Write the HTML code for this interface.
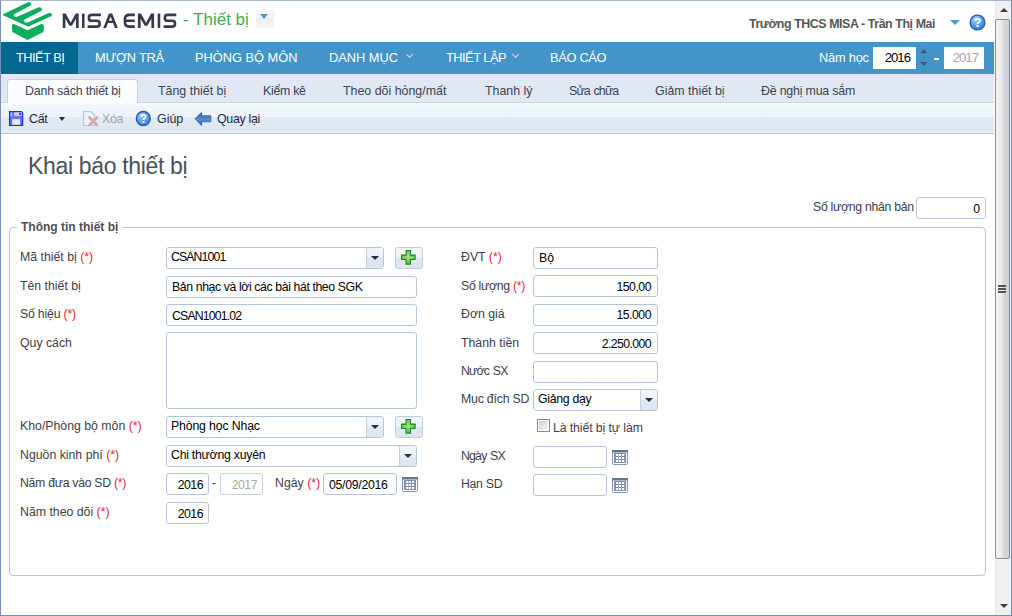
<!DOCTYPE html>
<html><head><meta charset="utf-8">
<style>
*{box-sizing:border-box;margin:0;padding:0}
html,body{width:1012px;height:616px;overflow:hidden;background:#fff}
body{position:relative;font-family:"Liberation Sans",sans-serif;color:#333}
.a{position:absolute}
.t{position:absolute;white-space:nowrap;line-height:20px;font-size:12.3px}
#frame{position:absolute;left:0;top:0;width:1012px;height:616px;border-left:1px solid #7391b4;border-top:1px solid #a9b9cd;border-right:1px solid #7391b4;border-bottom:1px solid #7391b4;pointer-events:none;z-index:50}
#nav{left:1px;top:42px;width:993px;height:32px;background:#4394c9}
#nav .act{left:0;top:0;width:77px;height:32px;background:#03678f}
.nv{position:absolute;top:48px;color:#fff;font-size:12.8px;line-height:20px;white-space:nowrap}
.chev{position:absolute;width:5px;height:5px;border-right:1px solid #d0e2f0;border-bottom:1px solid #d0e2f0;transform:rotate(45deg)}
#sub{left:1px;top:74px;width:993px;height:29px;background:#dfe8f3;border-bottom:1px solid #c8d5e4}
#acttab{left:7px;top:79px;width:131px;height:25px;background:#fbfcfe;border:1px solid #c3d1e2;border-bottom:none;border-radius:3px 3px 0 0}
.st{position:absolute;top:81px;color:#3a4454;font-size:12.4px;line-height:20px;white-space:nowrap}
#tb{left:1px;top:103px;width:993px;height:31px;background:linear-gradient(#fcfdff 0%,#f1f6fc 8%,#eef4fb 45%,#e2eaf4 48%,#dfe7f2 90%,#e5ecf5 100%);border-bottom:1px solid #b6c9de}
.tbt{position:absolute;top:109px;font-size:12.4px;line-height:20px;white-space:nowrap;color:#1e2a40}
.lbl{position:absolute;font-size:12.3px;line-height:20px;white-space:nowrap;color:#404048}
.req{color:#e8203a}
.inp{position:absolute;height:22px;background:#fff;border:1px solid #b3c6dc;border-radius:3px}
.iv{position:absolute;top:-1px;font-size:12.3px;line-height:20px;white-space:nowrap;color:#000}
.num{letter-spacing:-0.5px}
.ddb{position:absolute;top:0;right:0;width:17px;height:20px;background:linear-gradient(#f1f5fa 0%,#eef3f9 45%,#e0e8f2 50%,#dde6f1 100%);border-left:1px solid #bfcfe0;border-radius:0 2px 2px 0}
.ddb:after{content:"";position:absolute;left:4px;top:8px;border-left:4px solid transparent;border-right:4px solid transparent;border-top:4px solid #1e3050}
.plus{position:absolute;width:28px;height:22px;border:1px solid #c2cedc;border-radius:3px;background:linear-gradient(#f3f6fb 0%,#edf2f8 48%,#dee7f1 52%,#dce5f0 100%)}
.cal{position:absolute;width:16px;height:15px}
#sb{left:995px;top:1px;width:16px;height:614px;background:#f0f0f0;border-left:1px solid #e8e8e8}
</style></head><body>
<div id="frame"></div>

<!-- header -->
<svg class="a" style="left:0;top:0" width="60" height="42" viewBox="0 0 60 42">
  <path fill="#0aae5e" d="M3.6 14.0 L27.5 2.6 C29.5 1.7 32.3 3.2 30.7 5.5 L14.5 14.0 C12.8 15.0 13.8 16.8 16.4 17.1 L38.2 7.5 C40.5 6.5 43 8.8 41.5 10.8 L24.5 19.6 C22.5 20.6 24.5 22.8 27.7 22.6 L48.1 13.3 C50.5 12.2 53.5 14.6 51.5 16.0 L29.8 26.1 C28.8 26.6 27.6 26.6 26.6 26.1 L3.6 15.4 C2.6 14.9 2.6 14.5 3.6 14.0 Z"/>
  <path fill="#0aae5e" d="M11.9 26.5 C11.9 24.5 13 23.6 14.5 24.3 L27.5 30.2 L40.8 24.3 C42.5 23.6 43.8 24.5 43.8 26.3 L43.8 30.8 C43.8 31.5 43.5 31.9 42.8 32.3 L28.5 39.5 C27.9 39.8 27.3 39.8 26.7 39.5 L12.9 32.2 C12.2 31.8 11.9 31.4 11.9 30.8 Z"/>
</svg>
<svg class="a" style="left:0;top:0" width="180" height="42" viewBox="0 0 180 42"><g fill="none" stroke="#363a4a" stroke-width="2.6" stroke-linejoin="miter" stroke-miterlimit="3">
<path d="M62.70 27.90 L62.70 13.60 L65.70 13.60 L70.70 22.80 L75.70 13.60 L78.70 13.60 L78.70 27.90 L76.00 27.90 L76.00 18.80 L71.90 25.80 L69.50 25.80 L65.40 18.80 L65.40 27.90 Z" fill="#363a4a" stroke="none"/>
<path d="M83.25 13.6 V27.9"/>
<path d="M100.9 14.9 H92 Q88.9 14.9 88.9 17.6 V18.2 Q88.9 20.8 91.8 20.8 H96.8 Q99.6 20.8 99.6 23.6 V23.9 Q99.6 26.6 96.8 26.6 H87.6"/>
<path d="M103.3 27.9 L108.9 13.6 L112.2 13.6 L117.8 27.9 L115 27.9 L113.12 23.1 L107.98 23.1 L106.1 27.9 Z M108.92 20.7 L110.55 16.5 L112.18 20.7 Z" fill="#363a4a" fill-rule="evenodd" stroke="none"/>
<path d="M134.8 14.9 H129.5 Q124.9 14.9 124.9 19.5 V22 Q124.9 26.6 129.5 26.6 H134.8 M125.5 20.8 H134.8"/>
<path d="M137.90 27.90 L137.90 13.60 L140.90 13.60 L146.00 22.80 L151.10 13.60 L154.10 13.60 L154.10 27.90 L151.40 27.90 L151.40 18.80 L147.20 25.80 L144.80 25.80 L140.60 18.80 L140.60 27.90 Z" fill="#363a4a" stroke="none"/>
<path d="M158.95 13.6 V27.9"/>
<path d="M176.3 14.9 H167.4 Q164.9 14.9 164.9 17.6 V18.2 Q164.9 20.8 167.6 20.8 H172.2 Q175 20.8 175 23.6 V23.9 Q175 26.6 172.2 26.6 H163.6"/>
</g></svg>
<div class="t" style="left:183px;top:10px;font-size:17px;color:#45a94f">- Thiết bị</div>
<div class="a" style="left:256px;top:10px;width:18px;height:18px;background:#f3f3f3"></div>
<div class="a" style="left:260px;top:14px;border-left:4.7px solid transparent;border-right:4.7px solid transparent;border-top:5.5px solid #4a9acc"></div>

<div class="t" style="left:749px;top:14px;font-size:12.4px;font-weight:bold;color:#565656;letter-spacing:-0.42px">Trường THCS MISA - Trần Thị Mai</div>
<div class="a" style="left:950px;top:20px;border-left:5px solid transparent;border-right:5px solid transparent;border-top:5px solid #4a9acc"></div>
<svg class="a" style="left:969px;top:14px" width="17" height="17" viewBox="0 0 17 17">
  <defs><radialGradient id="hg" cx="0.4" cy="0.3" r="0.75"><stop offset="0" stop-color="#a8d4fa"/><stop offset="0.55" stop-color="#5a9ee8"/><stop offset="1" stop-color="#3878d0"/></radialGradient></defs>
  <circle cx="8.5" cy="8.5" r="7.4" fill="url(#hg)" stroke="#1b5bb4" stroke-width="1.3"/>
  <path d="M6 6.6 C6 4.2 11 4.2 11 6.6 C11 8.2 8.8 8.3 8.6 10" fill="none" stroke="#fff" stroke-width="1.8"/>
  <rect x="7.6" y="11" width="2" height="2" fill="#fff"/>
</svg>

<!-- nav -->
<div id="nav" class="a"><div class="act a"></div></div>
<div class="nv" style="left:16px;letter-spacing:-0.5px">THIẾT BỊ</div>
<div class="nv" style="left:95px;letter-spacing:-0.25px">MƯỢN TRẢ</div>
<div class="nv" style="left:195px">PHÒNG BỘ MÔN</div>
<div class="nv" style="left:329px">DANH MỤC</div>
<div class="chev" style="left:407px;top:52px"></div>
<div class="nv" style="left:446px;letter-spacing:-0.5px">THIẾT LẬP</div>
<div class="chev" style="left:513px;top:52px"></div>
<div class="nv" style="left:550px;letter-spacing:-0.3px">BÁO CÁO</div>
<div class="nv" style="left:819px;letter-spacing:-0.2px">Năm học</div>
<div class="a" style="left:873px;top:47px;width:43px;height:22px;background:#fff"></div>
<div class="iv num" style="left:873px;top:48px;width:37px;text-align:right;font-size:13.2px;letter-spacing:-1px">2016</div>
<svg class="a" style="left:919px;top:48px" width="10" height="20" viewBox="0 0 10 20"><path d="M1 5.2 L4.75 1 L8.5 5.2 Z M1 14 L8.5 14 L4.75 18.2 Z" fill="#485874"/></svg>

<div class="a" style="left:934px;top:58px;width:4.5px;height:2px;background:#fff"></div>
<div class="a" style="left:944px;top:47px;width:40px;height:22px;background:#fff"></div>
<div class="iv num" style="left:944px;top:48px;width:34px;text-align:right;font-size:13.2px;letter-spacing:-1px;color:#a8a8a8">2017</div>

<!-- subtabs -->
<div id="sub" class="a"></div>
<div id="acttab" class="a"></div>
<div class="st" style="left:25px;letter-spacing:-0.2px">Danh sách thiết bị</div>
<div class="st" style="left:158px">Tăng thiết bị</div>
<div class="st" style="left:263px;letter-spacing:-0.3px">Kiểm kê</div>
<div class="st" style="left:343px">Theo dõi hỏng/mất</div>
<div class="st" style="left:485px">Thanh lý</div>
<div class="st" style="left:569px;letter-spacing:-0.85px;word-spacing:1px">Sửa chữa</div>
<div class="st" style="left:655px">Giảm thiết bị</div>
<div class="st" style="left:761px;letter-spacing:-0.2px">Đề nghị mua sắm</div>

<!-- toolbar -->
<div id="tb" class="a"></div>
<svg class="a" style="left:8px;top:110px" width="17" height="17" viewBox="0 0 17 17">
  <path d="M1.6 1.6 H13.3 L14.6 2.9 V15.4 H1.6 Z" fill="#6178f0" stroke="#1a30dc" stroke-width="1.3"/>
  <rect x="2.6" y="2.4" width="1.2" height="4" fill="#c8d2fa"/>
  <rect x="6.2" y="2.3" width="7.4" height="3.6" fill="#d0d0d0"/>
  <rect x="11" y="2.8" width="1.8" height="2.2" fill="#2a44e8"/>
  <rect x="4.2" y="9.2" width="7.8" height="5.6" fill="#e8e8e8"/>
</svg>
<div class="tbt" style="left:29px;letter-spacing:-0.3px">Cất</div>
<div class="a" style="left:59px;top:117px;border-left:3.5px solid transparent;border-right:3.5px solid transparent;border-top:4.5px solid #1e2a40"></div>
<svg class="a" style="left:82px;top:110px" width="18" height="17" viewBox="0 0 18 17">
  <path d="M1.5 1.5 H9 L12.5 5 V15.5 H1.5 Z" fill="#eaf4fc" stroke="#a6cdee" stroke-width="1.2"/>
  <path d="M7.5 7.5 L15 15 M15 7.5 L7.5 15" stroke="#e0a2aa" stroke-width="2.6" stroke-linecap="round"/>
</svg>
<div class="tbt" style="left:102px;color:#a0a8b6;letter-spacing:-0.3px">Xóa</div>
<svg class="a" style="left:135px;top:110px" width="17" height="17" viewBox="0 0 17 17">
  <circle cx="8.3" cy="8.5" r="7" fill="url(#hg)" stroke="#1b5bb4" stroke-width="1.3"/>
  <path d="M5.9 6.6 C5.9 4.3 10.7 4.3 10.7 6.6 C10.7 8.2 8.6 8.3 8.4 10" fill="none" stroke="#fff" stroke-width="1.8"/>
  <rect x="7.4" y="11" width="2" height="2" fill="#fff"/>
</svg>
<div class="tbt" style="left:157px">Giúp</div>
<svg class="a" style="left:194px;top:111px" width="18" height="16" viewBox="0 0 18 16">
  <defs><linearGradient id="ag" x1="0" y1="0" x2="0" y2="1"><stop offset="0" stop-color="#2558a4"/><stop offset="0.55" stop-color="#5b8fd2"/><stop offset="1" stop-color="#2558a4"/></linearGradient></defs>
  <path d="M1 7.7 L7.6 1.3 V4.7 H16.8 V10.8 H7.6 V14.7 Z" fill="url(#ag)" stroke="#2e66b4" stroke-width="0.8"/>
</svg>
<div class="tbt" style="left:217px;letter-spacing:-0.3px">Quay lại</div>

<!-- content -->
<div class="t" style="left:28px;top:156px;font-size:23px;letter-spacing:-0.33px;color:#4c515b">Khai báo thiết bị</div>

<div class="inp" style="left:916px;top:197px;width:70px"></div>
<div class="lbl" style="left:813px;top:197px;letter-spacing:-0.3px">Số lượng nhân bản</div>
<div class="iv" style="left:916px;top:199px;width:64px;text-align:right">0</div>

<!-- fieldset -->
<div class="a" style="left:9px;top:227px;width:977px;height:349px;border:1px solid #a8c8e6;border-radius:4px"></div>
<div class="a" style="left:17px;top:222px;width:105px;height:10px;background:#fff"></div>
<div class="lbl" style="left:21px;top:217px;font-weight:bold;color:#4f4f4f;font-size:12px">Thông tin thiết bị</div>

<!-- left column -->
<div class="lbl" style="left:20px;top:247px">Mã thiết bị <span class="req">(*)</span></div>
<div class="inp" style="left:166px;top:247px;width:218px"><div class="iv num" style="left:4px;top:-1px;letter-spacing:-0.9px">CSAN1001</div><div class="ddb"></div></div>
<div class="plus" style="left:395px;top:247px"><svg class="a" style="left:5px;top:2px" width="16" height="16" viewBox="0 0 16 16"><defs><radialGradient id="pg" cx="0.5" cy="0.45" r="0.6"><stop offset="0" stop-color="#a6e68e"/><stop offset="1" stop-color="#4cbc3c"/></radialGradient></defs><path d="M5.1 0.5 h4.4 v4.6 h4.6 v4.4 h-4.6 v4.6 h-4.4 v-4.6 h-4.6 v-4.4 h4.6 z" fill="url(#pg)" stroke="#1a8a1a" stroke-width="1.1"/></svg></div>
<div class="lbl" style="left:20px;top:276px">Tên thiết bị</div>
<div class="inp" style="left:166px;top:276px;width:251px"><div class="iv" style="left:5px;top:0;letter-spacing:-0.4px">Bản nhạc và lời các bài hát theo SGK</div></div>
<div class="lbl" style="left:20px;top:304px;letter-spacing:-0.2px">Số hiệu <span class="req">(*)</span></div>
<div class="inp" style="left:166px;top:304px;width:251px"><div class="iv" style="left:5px;top:1px;letter-spacing:-0.85px">CSAN1001.02</div></div>
<div class="lbl" style="left:20px;top:333px">Quy cách</div>
<div class="inp" style="left:166px;top:332px;width:251px;height:77px"></div>
<div class="lbl" style="left:20px;top:416px">Kho/Phòng bộ môn <span class="req">(*)</span></div>
<div class="inp" style="left:166px;top:416px;width:218px"><div class="iv" style="left:4px;letter-spacing:-0.15px">Phòng học Nhạc</div><div class="ddb"></div></div>
<div class="plus" style="left:395px;top:416px"><svg class="a" style="left:5px;top:2px" width="16" height="16" viewBox="0 0 16 16"><path d="M5.1 0.5 h4.4 v4.6 h4.6 v4.4 h-4.6 v4.6 h-4.4 v-4.6 h-4.6 v-4.4 h4.6 z" fill="url(#pg)" stroke="#1a8a1a" stroke-width="1.1"/></svg></div>
<div class="lbl" style="left:20px;top:445px">Nguồn kinh phí <span class="req">(*)</span></div>
<div class="inp" style="left:166px;top:445px;width:251px"><div class="iv" style="left:4px;letter-spacing:-0.25px">Chi thường xuyên</div><div class="ddb"></div></div>
<div class="lbl" style="left:20px;top:473px;letter-spacing:-0.3px">Năm đưa vào SD <span class="req">(*)</span></div>
<div class="inp" style="left:166px;top:473px;width:43px"><div class="iv num" style="right:5px;top:1px">2016</div></div>
<div class="lbl" style="left:212px;top:473px">-</div>
<div class="inp" style="left:220px;top:473px;width:43px;border-color:#c3d2e3"><div class="iv num" style="right:5px;top:1px;color:#a8a8a8">2017</div></div>
<div class="lbl" style="left:275px;top:473px">Ngày <span class="req">(*)</span></div>
<div class="inp" style="left:323px;top:473px;width:74px"><div class="iv num" style="left:5px;top:1px;letter-spacing:-0.3px">05/09/2016</div></div>
<svg class="cal" style="left:402px;top:477px" width="16" height="15" viewBox="0 0 16 15"><rect x="0.5" y="0.5" width="15" height="14" rx="1" fill="#fff" stroke="#8595ab"/><rect x="0" y="0" width="16" height="2.5" fill="#62758f"/><rect x="2" y="3" width="12" height="10" fill="#7d8ea8"/><g fill="#fff"><rect x="4" y="4" width="2.4" height="2"/><rect x="7" y="4" width="2" height="2"/><rect x="10" y="4" width="2.2" height="2"/><rect x="4" y="7" width="2.4" height="2"/><rect x="7" y="7" width="2" height="2"/><rect x="10" y="7" width="2.2" height="2"/><rect x="4" y="10" width="2.4" height="2"/><rect x="7" y="10" width="2" height="2"/><rect x="10" y="10" width="2.2" height="2"/></g></svg>
<div class="lbl" style="left:20px;top:502px">Năm theo dõi <span class="req">(*)</span></div>
<div class="inp" style="left:166px;top:502px;width:43px"><div class="iv num" style="right:5px;top:1px">2016</div></div>

<!-- right column -->
<div class="lbl" style="left:461px;top:247px">ĐVT <span class="req">(*)</span></div>
<div class="inp" style="left:533px;top:247px;width:125px"><div class="iv" style="left:5px;top:0">Bộ</div></div>
<div class="lbl" style="left:461px;top:276px;letter-spacing:-0.3px">Số lượng <span class="req">(*)</span></div>
<div class="inp" style="left:533px;top:275px;width:125px"><div class="iv num" style="right:6px;top:1px">150,00</div></div>
<div class="lbl" style="left:461px;top:304px">Đơn giá</div>
<div class="inp" style="left:533px;top:304px;width:125px"><div class="iv num" style="right:6px;top:0">15.000</div></div>
<div class="lbl" style="left:461px;top:333px">Thành tiền</div>
<div class="inp" style="left:533px;top:332px;width:125px"><div class="iv num" style="right:6px;top:1px;letter-spacing:-0.6px">2.250.000</div></div>
<div class="lbl" style="left:461px;top:361px;letter-spacing:-0.8px;word-spacing:1px">Nước SX</div>
<div class="inp" style="left:533px;top:361px;width:125px"></div>
<div class="lbl" style="left:461px;top:389px;letter-spacing:-0.2px">Mục đích SD</div>
<div class="inp" style="left:533px;top:389px;width:125px"><div class="iv" style="left:4px;letter-spacing:-0.3px">Giảng dạy</div><div class="ddb"></div></div>
<div class="a" style="left:537px;top:419px;width:13px;height:13px;border:1px solid #8a8a8a;background:#fff;padding:1px"><div style="width:9px;height:9px;background:linear-gradient(135deg,#cdd2da,#f6f6f6)"></div></div>
<div class="lbl" style="left:553px;top:418px;letter-spacing:-0.1px">Là thiết bị tự làm</div>
<div class="lbl" style="left:461px;top:446px;letter-spacing:-0.8px;word-spacing:1px">Ngày SX</div>
<div class="inp" style="left:533px;top:446px;width:74px"></div>
<svg class="cal" style="left:612px;top:450px" width="16" height="15" viewBox="0 0 16 15"><rect x="0.5" y="0.5" width="15" height="14" rx="1" fill="#fff" stroke="#8595ab"/><rect x="0" y="0" width="16" height="2.5" fill="#62758f"/><rect x="2" y="3" width="12" height="10" fill="#7d8ea8"/><g fill="#fff"><rect x="4" y="4" width="2.4" height="2"/><rect x="7" y="4" width="2" height="2"/><rect x="10" y="4" width="2.2" height="2"/><rect x="4" y="7" width="2.4" height="2"/><rect x="7" y="7" width="2" height="2"/><rect x="10" y="7" width="2.2" height="2"/><rect x="4" y="10" width="2.4" height="2"/><rect x="7" y="10" width="2" height="2"/><rect x="10" y="10" width="2.2" height="2"/></g></svg>
<div class="lbl" style="left:461px;top:474px;letter-spacing:-0.3px">Hạn SD</div>
<div class="inp" style="left:533px;top:474px;width:74px"></div>
<svg class="cal" style="left:612px;top:478px" width="16" height="15" viewBox="0 0 16 15"><rect x="0.5" y="0.5" width="15" height="14" rx="1" fill="#fff" stroke="#8595ab"/><rect x="0" y="0" width="16" height="2.5" fill="#62758f"/><rect x="2" y="3" width="12" height="10" fill="#7d8ea8"/><g fill="#fff"><rect x="4" y="4" width="2.4" height="2"/><rect x="7" y="4" width="2" height="2"/><rect x="10" y="4" width="2.2" height="2"/><rect x="4" y="7" width="2.4" height="2"/><rect x="7" y="7" width="2" height="2"/><rect x="10" y="7" width="2.2" height="2"/><rect x="4" y="10" width="2.4" height="2"/><rect x="7" y="10" width="2" height="2"/><rect x="10" y="10" width="2.2" height="2"/></g></svg>

<!-- scrollbar -->
<div id="sb" class="a"></div>
<div class="a" style="left:999.5px;top:8px;border-left:4px solid transparent;border-right:4px solid transparent;border-bottom:4px solid #3c3c3c"></div>
<div class="a" style="left:995px;top:19px;width:15px;height:540px;border:1px solid #8e8e8e;border-radius:2px;background:linear-gradient(90deg,#f4f4f4 0%,#eaeaea 45%,#d8d8dc 55%,#cfcfd4 100%)"></div>
<div class="a" style="left:998px;top:285px;width:8px;height:2px;background:#555;box-shadow:0 3px 0 #555,0 6px 0 #555"></div>
<div class="a" style="left:999.5px;top:604px;border-left:4px solid transparent;border-right:4px solid transparent;border-top:4px solid #3c3c3c"></div>
</body></html>
